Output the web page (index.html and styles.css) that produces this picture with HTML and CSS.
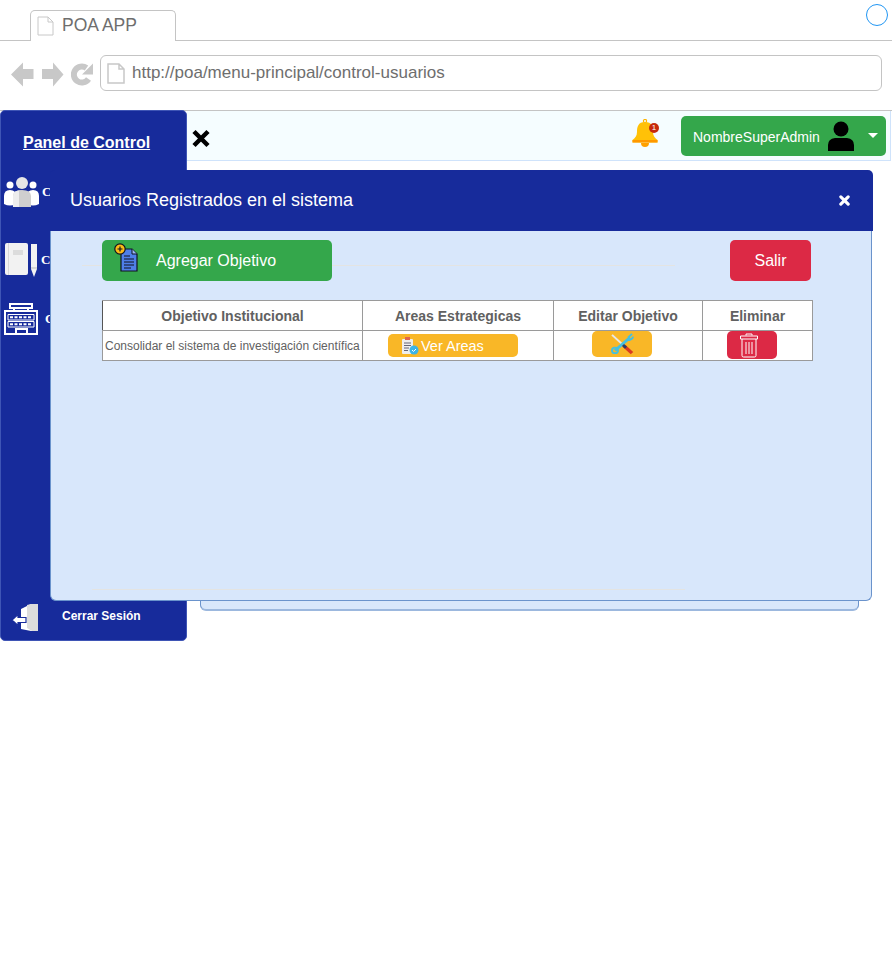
FILE: index.html
```html
<!DOCTYPE html>
<html lang="en">

<head>
  <meta charset="UTF-8" />
  <title>POA APP</title>
  <link rel="stylesheet" href="styles.css">
</head>

<body>
  <div class="tabBar">
    <div class="tab">
      <svg width="17" height="20" viewBox="0 0 17 20"><path d="M1 1H11L16 6V19H1Z M11 1V6H16" fill="#fff" stroke="#c8c8c8" stroke-width="1"/></svg>
      <span>POA APP</span>
    </div>
    <div class="circle"></div>
  </div>

  <div class="addressRow">
    <div class="navIcons">
      <svg width="24" height="25" viewBox="0 0 24 25"><path d="M0 12.500L12 0.500V7H22.500V17H12V24.500Z" fill="#c8c8c8"/></svg>
      <svg width="24" height="25" viewBox="0 0 24 25"><path d="M1 7H12V0.500L22.500 12.500L12 24.500V17H1Z" fill="#c8c8c8"/></svg>
      <svg width="24" height="25" viewBox="0 0 24 25"><path d="M17.500 17A8 8 0 1 1 15.500 6" fill="none" stroke="#c8c8c8" stroke-width="6"/><path d="M22 1.500V12.500H11Z" fill="#c8c8c8"/></svg>
    </div>
    <div class="addressBar">
      <svg width="18" height="21" viewBox="0 0 18 21"><path d="M1 1H12L17 6V20H1Z M12 1V6H17" fill="#fff" stroke="#c8c8c8" stroke-width="1.500"/></svg>
      <span>http://poa/menu-principal/control-usuarios</span>
    </div>
  </div>

  <div class="app">
    <aside class="sidebar">
      <a class="sideTitle">Panel de Control</a>

      <div class="sideItem usersItem">
        <svg width="36" height="32" viewBox="0 0 36 32">
          <circle cx="6" cy="9" r="3.500" fill="#fff"/>
          <circle cx="29" cy="9" r="3.500" fill="#fff"/>
          <circle cx="18" cy="7" r="6" fill="#e6e6e6"/>
          <path d="M0 28V20Q0 14 6 14Q12 14 12 20V28Q6 31 0 28Z" fill="#fff"/>
          <path d="M23 28V20Q23 14 29 14Q35 14 35 20V28Q29 31 23 28Z" fill="#fff"/>
          <path d="M9 31V20Q9 14 18 14Q27 14 27 20V31Z" fill="#cfcfcf"/>
          <path d="M18 14Q9 14 9 20V31H15V14Z" fill="#ededed"/>
        </svg>
        <span>C</span>
      </div>

      <div class="sideItem notesItem">
        <svg width="34" height="36" viewBox="0 0 34 36">
          <rect x="1" y="1" width="23" height="32" rx="2" fill="#f2f2f2"/>
          <rect x="4" y="1" width="1" height="32" fill="#d8d8d8"/>
          <rect x="9" y="8" width="10" height="5" fill="#dcdcdc"/>
          <path d="M27 2H33V27L30 35L27 27Z" fill="#f2f2f2"/>
          <path d="M27 26H33" stroke="#bbb" stroke-width="1"/>
        </svg>
        <span>C</span>
      </div>

      <div class="sideItem buildItem">
        <svg width="34" height="33" viewBox="0 0 34 33" fill="none" stroke="#fff" stroke-width="2">
          <path d="M6 2H28V6H6Z M10 6V9 M24 6V9"/>
          <rect x="1" y="9" width="32" height="23"/>
          <path d="M12 32V27H23V32"/>
          <path d="M4 12.500H30V18H4Z M4 19.500H30V25H4Z" stroke-width="1"/>
          <path d="M6 15.200H28M6 22.200H28" stroke-width="2" stroke-dasharray="3 1.500"/>
        </svg>
        <span>C</span>
      </div>

      <div class="logout">
        <svg width="30" height="28" viewBox="0 0 30 28">
          <path d="M10 5L20 0H27V27H20L10 25Z" fill="#fff"/>
          <path d="M16 1L20 0H27V27H21L16 24Z" fill="#dcdcdc"/>
          <path d="M1 16L7 10.500V13.500H15V18.500H7V21.500Z" fill="#fff" stroke="#172b9b" stroke-width="1.200"/>
        </svg>
        <span>Cerrar Sesión</span>
      </div>
    </aside>

    <div class="main">
      <nav class="topNav">
        <svg class="closeMenu" width="20" height="19" viewBox="0 0 20 19"><path d="M3 2.500L17 16.500M17 2.500L3 16.500" stroke="#000" stroke-width="4.500"/></svg>
        <div class="bell">
          <svg width="26" height="28" viewBox="0 0 26 28">
            <circle cx="13" cy="2" r="1.600" fill="none" stroke="#ffb300" stroke-width="1.200"/>
            <path d="M13 3C6 3 5 8 5 13C5 17 3 19 0.500 21V23.500H25.500V21C23 19 21 17 21 13C21 8 20 3 13 3Z" fill="#ffc107"/>
            <rect x="0.500" y="21" width="25" height="2.500" fill="#ff9800"/>
            <path d="M9 24H17A4 4 0 0 1 9 24Z" fill="#ffa000"/>
          </svg>
          <span class="badge">1</span>
        </div>
        <div class="userBtn">
          <span>NombreSuperAdmin</span>
          <svg width="28" height="30" viewBox="0 0 28 30"><circle cx="14" cy="8" r="7.500" fill="#000"/><path d="M1 30V24Q1 18 8 17H20Q27 18 27 24V30Z" fill="#000"/></svg>
          <i class="caret"></i>
        </div>
      </nav>
      <div class="backPanel"></div>
    </div>

    <section class="modal">
      <header class="modalHead">
        <h2>Usuarios Registrados en el sistema</h2>
        <svg width="11" height="11" viewBox="0 0 12 12"><path d="M2 2L10 10M10 2L2 10" stroke="#fff" stroke-width="3.400" stroke-linecap="round"/></svg>
      </header>

      <div class="modalBody">
        <div class="actions">
          <hr class="lineTop">
          <button class="addBtn">
            <svg width="24" height="30" viewBox="0 0 24 30">
              <path d="M7 6H18L23 11V28H7Z" fill="#4f7fe8" stroke="#10131f" stroke-width="1.200"/>
              <path d="M18 6V11H23" fill="#9ab8f5" stroke="#10131f" stroke-width="1"/>
              <path d="M10 13H16M10 16H20M10 19H20M10 22H20M10 25H17" stroke="#10131f" stroke-width="1"/>
              <circle cx="6" cy="6" r="5.200" fill="#fbbc16" stroke="#10131f" stroke-width="1.200"/>
              <path d="M3.500 6H8.500M6 3.500V8.500" stroke="#10131f" stroke-width="1.200"/>
            </svg>
            <span>Agregar Objetivo</span>
          </button>
          <button class="exitBtn">Salir</button>
        </div>

        <table class="objTable">
          <thead>
            <tr>
              <th class="colObj">Objetivo Institucional</th>
              <th class="colArea">Areas Estrategicas</th>
              <th class="colEdit">Editar Objetivo</th>
              <th class="colDel">Eliminar</th>
            </tr>
          </thead>
          <tbody>
            <tr>
              <td class="objText">Consolidar el sistema de investigación científica</td>
              <td>
                <button class="areasBtn">
                  <svg width="18" height="18" viewBox="0 0 18 18">
                    <rect x="1" y="2" width="11" height="15" rx="1" fill="#eee"/>
                    <rect x="4" y="0" width="5" height="3" fill="#e0664c"/>
                    <path d="M3 6H10M3 8.500H10M3 11H8M3 13.500H7" stroke="#667" stroke-width="1"/>
                    <circle cx="13" cy="13" r="4.500" fill="#3cb4e6"/>
                    <path d="M11 13L12.500 14.500L15 12" fill="none" stroke="#fff" stroke-width="1"/>
                  </svg>
                  <span>Ver Areas</span>
                </button>
              </td>
              <td>
                <button class="editBtn">
                  <svg width="24" height="22" viewBox="0 0 24 24" preserveAspectRatio="none">
                    <path d="M2 2L13 13" stroke="#e8e8e8" stroke-width="2"/>
                    <path d="M20 5L5 19" stroke="#45c0e0" stroke-width="3"/>
                    <circle cx="5" cy="19" r="3" fill="none" stroke="#45c0e0" stroke-width="2"/>
                    <path d="M22 1L18 5M23 4A4 4 0 0 1 17 7" fill="none" stroke="#45c0e0" stroke-width="2"/>
                    <path d="M14 14L22 22" stroke="#d93a20" stroke-width="3.500"/>
                    <path d="M13 13L16 16" stroke="#2b3f66" stroke-width="3"/>
                  </svg>
                </button>
              </td>
              <td>
                <button class="delBtn">
                  <svg width="18" height="25" viewBox="0 0 18 25" fill="none" stroke="#fff" stroke-width="1">
                    <path d="M6 2.500V1H12V2.500M0.500 3H17.500V6H0.500Z"/>
                    <path d="M2 6V22.500Q2 24 3.500 24H14.500Q16 24 16 22.500V6"/>
                    <path d="M6 9V21M9 9V21M12 9V21"/>
                  </svg>
                </button>
              </td>
            </tr>
          </tbody>
        </table>
        <hr class="lineBottom">
      </div>
    </section>
  </div>
</body>

</html>
```

FILE: styles.css
```css
* {
  box-sizing: border-box;
}

body {
  margin: 0;
  font-family: "Liberation Sans", Arial, sans-serif;
  background-color: #fff;
}

button {
  font-family: inherit;
  border: none;
  color: #fff;
  display: flex;
  align-items: center;
  padding: 0;
}

.tabBar {
  height: 41px;
  padding: 10px 0 0 30px;
  border-bottom: 1px solid #c4c4c4;
  display: flex;
  justify-content: space-between;
}

.tab {
  width: 146px;
  height: 31px;
  background: #fff;
  border: 1px solid #c4c4c4;
  border-bottom: none;
  border-radius: 5px 5px 0 0;
  padding: 0 0 1px 6px;
  display: flex;
  align-items: center;
  gap: 8px;
  font-size: 17.500px;
  color: #6e6e6e;
}

.circle {
  width: 22px;
  height: 22px;
  margin: -6px 4px 0 0;
  border: 1px solid #2196f3;
  border-radius: 50%;
}

.addressRow {
  height: 69px;
  padding: 14px 10px 0 11px;
  display: flex;
  align-items: flex-start;
}

.navIcons {
  width: 89px;
  height: 36px;
  padding-top: 3px;
  display: flex;
  align-items: center;
  gap: 6px;
}

.addressBar {
  flex: 1;
  height: 36px;
  border: 1px solid #c4c4c4;
  border-radius: 6px;
  padding-left: 6px;
  display: flex;
  align-items: center;
  gap: 7px;
  font-size: 17px;
  color: #6e6e6e;
}

.app {
  position: relative;
  display: flex;
  border-top: 1px solid #c4c4c4;
}

.sidebar {
  width: 187px;
  height: 531px;
  margin-top: -1px;
  position: relative;
  z-index: 1;
  background: #172b9b;
  border: 1px solid #3f55b5;
  border-radius: 5px;
  color: #fff;
  display: flex;
  flex-direction: column;
}

.sideTitle {
  margin: 22px 0 0 22px;
  font-size: 16px;
  font-weight: bold;
  line-height: 20px;
  text-decoration: underline;
}

.sideItem {
  display: flex;
  align-items: center;
  font-family: "Liberation Serif", serif;
  font-size: 13px;
  font-weight: bold;
  white-space: nowrap;
}

.usersItem {
  margin: 23px 0 0 3px;
  gap: 2px;
}

.notesItem {
  margin: 34px 0 0 3px;
  gap: 3px;
}

.buildItem {
  margin: 24px 0 0 3px;
  gap: 7px;
}

.logout {
  margin: auto 0 8px 10px;
  display: flex;
  align-items: center;
  gap: 21px;
  font-size: 12px;
  font-weight: bold;
}

.logout span {
  margin-top: -4px;
}

.main {
  flex: 1;
}

.topNav {
  height: 50px;
  margin-right: 1px;
  padding: 0 4px 0 4px;
  background: #f5fdff;
  border: 1px solid #cfe3fb;
  border-top: none;
  border-left: none;
  display: flex;
  align-items: center;
}

.closeMenu {
  margin-top: 5px;
}

.bell {
  margin: -5px 23px 0 auto;
  position: relative;
  height: 28px;
}

.badge {
  position: absolute;
  top: 4px;
  left: 17px;
  width: 10px;
  height: 10px;
  border-radius: 50%;
  background: #c62a0c;
  color: #fff;
  font-size: 8px;
  line-height: 10px;
  text-align: center;
}

.userBtn {
  width: 205px;
  height: 40px;
  background: #34a74b;
  border-radius: 5px;
  padding-left: 12px;
  color: #fff;
  font-size: 14px;
  display: flex;
  align-items: center;
}

.userBtn span {
  margin-top: 2px;
}

.userBtn svg {
  margin: 1px 0 0 7px;
}

.caret {
  margin: 0 0 0 13px;
  border-left: 5px solid transparent;
  border-right: 5px solid transparent;
  border-top: 5px solid #fff;
}

.backPanel {
  margin: 9px 33px 0 13px;
  height: 441px;
  background: #d8e7fb;
  border: 1px solid #6a93cc;
  border-bottom: 2px solid #9cb8de;
  border-radius: 0 0 6px 6px;
}

/* modal covers sidebar and content */
.modal {
  position: absolute;
  left: 50px;
  top: 59px;
  width: 823px;
  z-index: 2;
}

.modalHead {
  height: 61px;
  background: #172b9b;
  border-radius: 5px 5px 0 0;
  padding: 0 23px 0 20px;
  color: #fff;
  display: flex;
  align-items: center;
  justify-content: space-between;
}

.modalHead h2 {
  margin: 0;
  font-size: 18px;
  font-weight: normal;
}

.modalBody {
  position: relative;
  width: 822px;
  height: 370px;
  background: #d8e7fb;
  border: 1px solid #6a93cc;
  border-top: none;
  border-radius: 0 0 6px 6px;
  padding: 9px 0 0 51px;
}

.actions {
  position: relative;
  width: 709px;
  height: 41px;
  display: flex;
  justify-content: space-between;
}

.lineTop,
.lineBottom {
  position: absolute;
  margin: 0;
  border: none;
  height: 1px;
  width: 593px;
  background: #e4e4e2;
}

.lineTop {
  left: -20px;
  top: 25px;
}

.lineBottom {
  left: 41px;
  bottom: 10px;
}

.addBtn,
.exitBtn {
  position: relative;
  height: 41px;
  font-size: 16px;
  border-radius: 5px;
}

.addBtn {
  width: 230px;
  background: #34a74b;
  padding: 0 0 0 12px;
  gap: 18px;
}

.addBtn svg {
  margin-top: -6px;
}

.exitBtn {
  width: 81px;
  background: #dc2945;
  justify-content: center;
}

.objTable {
  width: 711px;
  margin-top: 19px;
  border-collapse: collapse;
  table-layout: fixed;
  background: #fff;
  color: #616161;
}

.objTable th,
.objTable td {
  border: 1px solid #9a9a9a;
  height: 30px;
  padding: 0;
}

.objTable th {
  font-size: 14px;
  padding-top: 1px;
}

.objTable .colObj {
  width: 260px;
  border-left-color: #555;
}

.colArea {
  width: 191px;
}

.colEdit {
  width: 149px;
}

.objTable .objText {
  font-size: 12px;
  padding-left: 2px;
  white-space: nowrap;
}

.areasBtn {
  width: 130px;
  height: 23px;
  margin: 0 0 0 25px;
  background: #f9b727;
  border-radius: 5px;
  padding-left: 13px;
  gap: 2px;
  font-size: 14.500px;
}

.editBtn {
  width: 60px;
  height: 26px;
  margin: 0 0 3px 38px;
  background: #f9b727;
  border-radius: 5px;
  justify-content: center;
}

.delBtn {
  width: 50px;
  height: 28px;
  margin: 0 0 1px 24px;
  padding-right: 6px;
  background: #dc2945;
  border-radius: 5px;
  justify-content: center;
}
```
